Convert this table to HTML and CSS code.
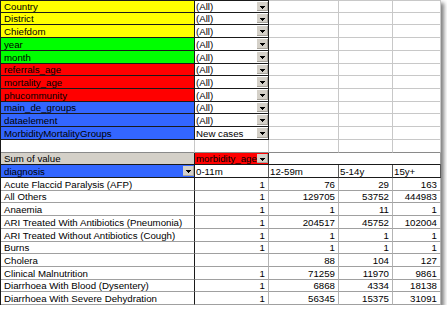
FILE: index.html
```html
<!DOCTYPE html>
<html>
<head>
<meta charset="utf-8">
<link rel="stylesheet" href="styles.css">
</head>
<body>
<div class="sheet">
  <div class="c lab yel r0">Country</div><div class="c sel r0"><span class="t">(All)</span><span class="dd"></span></div><div class="c blank r0"></div><div class="c blank r0"></div><div class="c blank r0"></div>
  <div class="c lab yel">District</div><div class="c sel"><span class="t">(All)</span><span class="dd"></span></div><div class="c blank"></div><div class="c blank"></div><div class="c blank"></div>
  <div class="c lab yel">Chiefdom</div><div class="c sel"><span class="t">(All)</span><span class="dd"></span></div><div class="c blank"></div><div class="c blank"></div><div class="c blank"></div>
  <div class="c lab grn">year</div><div class="c sel"><span class="t">(All)</span><span class="dd"></span></div><div class="c blank"></div><div class="c blank"></div><div class="c blank"></div>
  <div class="c lab grn">month</div><div class="c sel"><span class="t">(All)</span><span class="dd"></span></div><div class="c blank"></div><div class="c blank"></div><div class="c blank"></div>
  <div class="c lab red">referrals_age</div><div class="c sel"><span class="t">(All)</span><span class="dd"></span></div><div class="c blank"></div><div class="c blank"></div><div class="c blank"></div>
  <div class="c lab red">mortality_age</div><div class="c sel"><span class="t">(All)</span><span class="dd"></span></div><div class="c blank"></div><div class="c blank"></div><div class="c blank"></div>
  <div class="c lab red">phucommunity</div><div class="c sel"><span class="t">(All)</span><span class="dd"></span></div><div class="c blank"></div><div class="c blank"></div><div class="c blank"></div>
  <div class="c lab blu">main_de_groups</div><div class="c sel"><span class="t">(All)</span><span class="dd"></span></div><div class="c blank"></div><div class="c blank"></div><div class="c blank"></div>
  <div class="c lab blu">dataelement</div><div class="c sel"><span class="t">(All)</span><span class="dd"></span></div><div class="c blank"></div><div class="c blank"></div><div class="c blank"></div>
  <div class="c lab blu">MorbidityMortalityGroups</div><div class="c sel"><span class="t">New cases</span><span class="dd"></span></div><div class="c blank"></div><div class="c blank"></div><div class="c blank"></div>

  <div class="c blank edge"></div><div class="c blank edge"></div><div class="c blank edge"></div><div class="c blank edge"></div><div class="c blank edge"></div>

  <div class="c sumhd">Sum of value</div><div class="c fld red"><span class="t">morbidity_age</span><span class="dd"></span></div><div class="c colarea"></div>

  <div class="c fld blu rowfld"><span class="t">diagnosis</span><span class="dd"></span></div><div class="c colhd">0-11m</div><div class="c colhd">12-59m</div><div class="c colhd">5-14y</div><div class="c colhd">15y+</div>

  <div class="c rl">Acute Flaccid Paralysis (AFP)</div><div class="c num">1</div><div class="c num">76</div><div class="c num">29</div><div class="c num">163</div>
  <div class="c rl">All Others</div><div class="c num">1</div><div class="c num">129705</div><div class="c num">53752</div><div class="c num">444983</div>
  <div class="c rl">Anaemia</div><div class="c num">1</div><div class="c num">1</div><div class="c num">11</div><div class="c num">1</div>
  <div class="c rl">ARI Treated With Antibiotics (Pneumonia)</div><div class="c num">1</div><div class="c num">204517</div><div class="c num">45752</div><div class="c num">102004</div>
  <div class="c rl">ARI Treated Without Antibiotics (Cough)</div><div class="c num">1</div><div class="c num">1</div><div class="c num">1</div><div class="c num">1</div>
  <div class="c rl">Burns</div><div class="c num">1</div><div class="c num">1</div><div class="c num">1</div><div class="c num">1</div>
  <div class="c rl">Cholera</div><div class="c num"></div><div class="c num">88</div><div class="c num">104</div><div class="c num">127</div>
  <div class="c rl">Clinical Malnutrition</div><div class="c num">1</div><div class="c num">71259</div><div class="c num">11970</div><div class="c num">9861</div>
  <div class="c rl">Diarrhoea With Blood (Dysentery)</div><div class="c num">1</div><div class="c num">6868</div><div class="c num">4334</div><div class="c num">18138</div>
  <div class="c rl">Diarrhoea With Severe Dehydration</div><div class="c num">1</div><div class="c num">56345</div><div class="c num">15375</div><div class="c num">31091</div>
</div>
</body>
</html>
```

FILE: styles.css
```css
html, body {
  margin: 0;
  padding: 0;
  background: #ffffff;
}

body {
  font-family: "Liberation Sans", Arial, sans-serif;
  font-size: 9.7px;
  color: #000;
}

.sheet {
  display: grid;
  width: 441px;
  box-sizing: border-box;
  grid-template-columns: 194px 74px 70px 54px 48px;
  grid-template-rows: 13px 12px 13px 13px 13px 12px 13px 13px 12px 13px 13px 13px 12px 13px 13px 12px 13px 13px 13px 12px 13px 13px 12px 13px;
  border-left: 1px solid #1a1a1a;
  box-shadow: 3px 3px 4px rgba(0, 0, 0, 0.5);
  background: #fff;
}

.c {
  box-sizing: border-box;
  display: flex;
  align-items: flex-end;
  min-width: 0;
  overflow: hidden;
  white-space: nowrap;
  line-height: 10px;
  border-right: 1px solid #c8c8c8;
  border-bottom: 1px solid #c8c8c8;
  padding: 0 0 0 1px;
}

.r0 { border-top: 1px solid #c8c8c8; }

.lab {
  padding-left: 3px;
  border-color: #1a1a1a;
}

.sel {
  border-color: #1a1a1a;
  background: #fff;
}

.yel { background: #ffff00; }
.grn { background: #00ff00; }
.red { background: #ff0000; }
.blu { background: #3366ff; }

.blank.edge { border-bottom-color: #8a8a8a; }

.t {
  flex: 1 1 auto;
  min-width: 0;
  overflow: hidden;
}

.dd {
  flex: none;
  align-self: stretch;
  width: 11px;
  margin: 1px 0 1px 0;
  background: #d4d0c8;
  box-shadow: inset -1px -1px 0 #a8a49c;
  position: relative;
}

.dd::after {
  content: "";
  position: absolute;
  left: 3px;
  top: 4px;
  width: 5px;
  height: 3px;
  background:
    linear-gradient(#000, #000) 0 0 / 5px 1px no-repeat,
    linear-gradient(#000, #000) 1px 1px / 3px 1px no-repeat,
    linear-gradient(#000, #000) 2px 2px / 1px 1px no-repeat;
}

.sumhd {
  background: #d4d0c8;
  padding-left: 3px;
  border-right-color: #1a1a1a;
  border-bottom-color: #1a1a1a;
}

.fld {
  border-right-color: #1a1a1a;
  border-bottom-color: #1a1a1a;
}

.rowfld {
  padding-left: 3px;
}

.colarea {
  grid-column: span 3;
  border-right-color: #9a9a9a;
  border-bottom-color: #1a1a1a;
}

.colhd {
  border-right-color: #5a5a5a;
  border-bottom-color: #1a1a1a;
}

.rl {
  padding-left: 3px;
  border-right-color: #1a1a1a;
  border-bottom-color: #a0a0a0;
}

.num {
  justify-content: flex-end;
  padding: 0 3px 0 0;
  border-right-color: #b4b4b4;
  border-bottom-color: #a0a0a0;
}
```
